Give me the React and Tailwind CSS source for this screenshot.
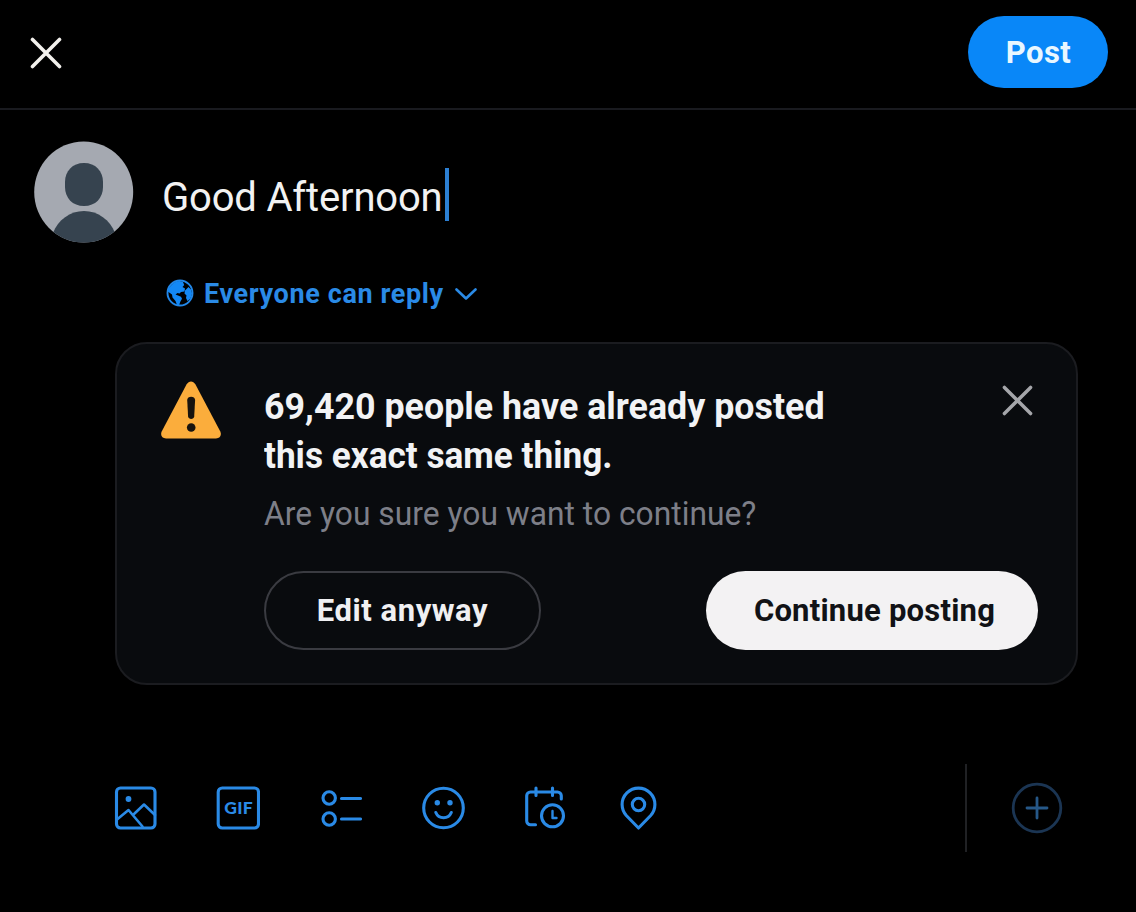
const BLUE = "#2a8ae6";

function CloseIcon({ className, strokeWidth }) {
  return (
    <svg viewBox="0 0 32 32" fill="none" stroke="currentColor" strokeWidth={strokeWidth} strokeLinecap="round" className={className}>
      <path d="M2.500 2.500l27 27M29.500 2.500l-27 27" />
    </svg>
  );
}

function Avatar() {
  return (
    <svg viewBox="0 0 100 102" className="h-[102px] w-[100px] shrink-0">
      <defs>
        <clipPath id="avatar-clip">
          <ellipse cx="49.700" cy="51" rx="49.5" ry="50.5" />
        </clipPath>
      </defs>
      <g clipPath="url(#avatar-clip)">
        <rect width="100" height="102" fill="#a5a9b1" />
        <path d="M50 22c11.500 0 19 8 19 19v5c0 11-7.500 19-19 19s-19-8-19-19v-5c0-11 7.500-19 19-19z" fill="#36434f" />
        <path d="M19 92c5-13 17-22 31-22s26 9 31 22v12H19z" fill="#36434f" />
      </g>
    </svg>
  );
}

function GlobeIcon() {
  return (
    <svg viewBox="0 0 28 28" className="size-7 shrink-0">
      <circle cx="14" cy="14" r="12.500" fill="none" stroke="#2287e8" strokeWidth="1.900" />
      <path d="M1.800 12.500C3 7 8 2.500 13.500 2l3.500 1 1.200 3-1.700 2 2.500 1.500-.5 3-3.500.5-1.500 1.500-2-.5-2 1.500 2.500 1 3 1.200 1 2-1.800 3.300-1.200 3.500-2-.5-1.500-4-3-3.500-.5-3z" fill="#1388f5" />
      <path d="M19 11.500l3.500-3.500 2.500 2.500 1 4-1.500 5-3 2.500-1.500-3 .5-2.500-2-2z" fill="#1388f5" />
    </svg>
  );
}

function WarningIcon() {
  return (
    <svg viewBox="0 0 62 58" className="mt-px h-[58px] w-[62px] shrink-0">
      <path d="M26.500 3.500C29-.5 33-.5 35.500 3.500L60.300 50.500c1.600 3.700-.3 7-4.300 7H6c-4 0-5.900-3.300-4.300-7z" fill="#fbad3c" />
      <path d="M27.200 19c-.1-4.500 8-4.500 7.900 0l-.9 16.500c-.2 3.200-5.900 3.200-6.100 0z" fill="#17130e" />
      <circle cx="31.200" cy="46.500" r="4.300" fill="#17130e" />
    </svg>
  );
}

function ToolIcon({ children, className }) {
  return (
    <svg viewBox="0 0 44 44" fill="none" stroke={BLUE} strokeWidth="3.100" strokeLinecap="round" strokeLinejoin="round" className={className}>
      {children}
    </svg>
  );
}

function Toolbar() {
  return (
    <div className="flex h-[88px] items-center pl-[114px]">
      <div className="flex w-[851px] items-center gap-[58px]">
        <ToolIcon className="size-11">
          <rect x="2.500" y="2" width="38.500" height="40" rx="4" />
          <circle cx="14.500" cy="13" r="2.900" fill={BLUE} stroke="none" />
          <path d="M3 33.500L14.500 24 28.500 40.500M19.500 28.500L30 18.500l11 10.500" strokeWidth="2.600" />
        </ToolIcon>
        <ToolIcon className="size-11">
          <rect x="2.200" y="2" width="40.300" height="40" rx="4" />
          <text x="22.500" y="28.300" textAnchor="middle" textLength="28.500" lengthAdjust="spacing" fill={BLUE} stroke="none" className="font-['Lato',sans-serif] text-[17.5px] font-black">GIF</text>
        </ToolIcon>
        <ToolIcon className="size-11">
          <circle cx="11.200" cy="12" r="6.200" />
          <circle cx="11.200" cy="33" r="6.200" />
          <path d="M23.500 12.500h19M23.500 33h19" />
        </ToolIcon>
        <ToolIcon className="size-11 overflow-visible">
          <circle cx="23.500" cy="22" r="19.800" />
          <circle cx="17.300" cy="16.800" r="2.700" fill={BLUE} stroke="none" />
          <circle cx="30" cy="16.800" r="2.700" fill={BLUE} stroke="none" />
          <path d="M15.800 26.500c3 7 12.500 7 15.500 0" />
        </ToolIcon>
        <ToolIcon className="size-11">
          <path d="M13.500 38.700H8.500a3.800 3.800 0 0 1-3.800-3.800V9.800A3.800 3.800 0 0 1 8.500 6h27a3.800 3.800 0 0 1 3.800 3.800V13M14 2v7.500M30.500 2v7.500" />
          <circle cx="30.500" cy="29.800" r="11" />
          <path d="M30.500 25v7h4" strokeWidth="2.400" />
        </ToolIcon>
        <ToolIcon className="-ml-2 size-11">
          <path d="M22.500 42L10.300 29.500A17 17 0 0 1 6.100 18.500a16.400 16.400 0 0 1 32.800 0c0 4.500-1.500 8-4.200 11z" />
          <circle cx="22.500" cy="18.500" r="6.200" />
        </ToolIcon>
      </div>
      <div className="h-[88px] w-0.5 bg-[#202124]" />
      <svg viewBox="0 0 52 52" fill="none" className="ml-[44px] size-[52px]">
        <circle cx="26" cy="26" r="23.800" stroke="#1b3553" strokeWidth="2.800" />
        <path d="M26 16v20M16 26h20" stroke="#265888" strokeWidth="2.800" strokeLinecap="round" />
      </svg>
    </div>
  );
}

function DuplicateNotice() {
  return (
    <section className="ml-[115px] flex h-[343px] w-[963px] rounded-[32px] border-2 border-[#1b1c20] bg-[#090b0e] pl-[43px] pt-9">
      <WarningIcon />
      <div className="ml-[42px] w-[774px]">
        <div className="flex h-[100px] justify-between">
          <h1 className="w-[600px] pt-0.5 text-[37px] leading-[49px] font-bold whitespace-nowrap text-[#f2f3f5]">
            <span className="block origin-left scale-x-[0.968]">69,420 people have already posted</span>
            <span className="block origin-left scale-x-[0.951]">this exact same thing.</span>
          </h1>
          <CloseIcon strokeWidth={3.6} className="mr-[5px] mt-[5px] size-[31px] text-[#a5a6aa]" />
        </div>
        <p className="mt-[11px] origin-left scale-x-[0.935] text-[34px] leading-[44px] whitespace-nowrap text-[#7d7f88]">Are you sure you want to continue?</p>
        <div className="mt-9 flex justify-between">
          <button className="h-[79px] w-[277px] rounded-full border-2 border-[#3a3b41] pt-0.5 text-[31px] font-bold tracking-[0.55px] whitespace-nowrap text-[#f0f0f2]">Edit anyway</button>
          <button className="h-[79px] w-[332px] rounded-full bg-[#f3f2f3] pl-[5px] pt-0.5 text-[31px] font-bold tracking-[0.22px] whitespace-nowrap text-[#111216]">Continue posting</button>
        </div>
      </div>
    </section>
  );
}

export default function App() {
  return (
    <main className="h-[912px] w-[1136px] overflow-hidden bg-black font-['Roboto',sans-serif]">
      <header className="flex h-[110px] items-start justify-between border-b-2 border-[#191a1f] pl-[30px] pr-7">
        <CloseIcon strokeWidth={3.6} className="mt-[37px] size-8 text-[#f3f1ed]" />
        <button className="mt-4 h-[72px] w-[140px] rounded-full bg-[#0987f8] pl-px pt-0.5 text-[31px] font-bold tracking-[0.4px] text-[#e9f7ff]">Post</button>
      </header>
      <div className="mt-[31px] flex h-[102px] items-start pl-[34px]">
        <Avatar />
        <div className="ml-7 mt-[27px] flex items-start">
          <span className="pt-1 text-[40px] leading-[52px] tracking-[-0.18px] whitespace-nowrap text-[#f2f2f2]">Good Afternoon</span>
          <span className="ml-0.5 h-[53px] w-1 bg-[#2c7fd2]" />
        </div>
      </div>
      <div className="mt-[30px] flex h-10 items-center pl-[166px] text-[#2a8ae6]">
        <GlobeIcon />
        <span className="ml-2.5 pt-0.5 text-[27px] font-bold tracking-[0.62px] whitespace-nowrap">Everyone can reply</span>
        <svg viewBox="0 0 22 12" fill="none" stroke="currentColor" strokeWidth="2.600" strokeLinecap="round" strokeLinejoin="round" className="ml-[11px] mt-0.5 h-3 w-[22px]">
          <path d="M1.500 1.500L11 10.500 20.500 1.500" />
        </svg>
      </div>
      <div className="mt-[29px]">
        <DuplicateNotice />
      </div>
      <div className="mt-[79px]">
        <Toolbar />
      </div>
    </main>
  );
}
